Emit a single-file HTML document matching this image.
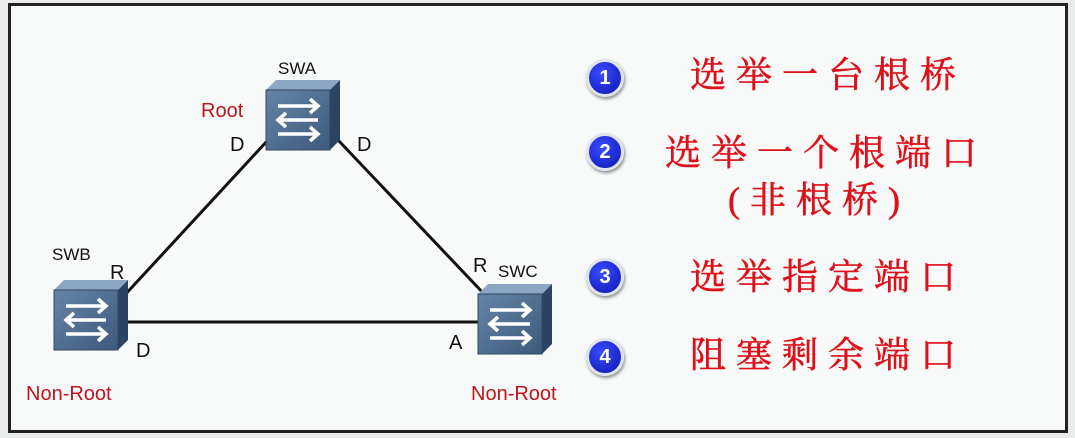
<!DOCTYPE html>
<html><head><meta charset="utf-8"><style>
body{margin:0;width:1075px;height:438px;background:#e9ecea;position:relative;overflow:hidden;font-family:"Liberation Sans",sans-serif}
#f{position:absolute;left:8px;top:3px;width:1054px;height:424px;border:3px solid #222;background:#f7faf8}
.t{position:absolute;font-size:17px;color:#111}
.b{font-size:20px}
.r{color:#c0141c}
.cn{position:absolute;font-family:"Liberation Serif","Noto Serif CJK SC","Noto Sans CJK SC",serif;color:#e0101a;font-size:36px;letter-spacing:10px;white-space:nowrap;line-height:40px;-webkit-text-stroke:0.6px #e0101a}
.n{position:absolute;width:32px;height:32px;border-radius:50%;background:radial-gradient(circle at 40% 35%,#3a4cff,#0a14b0);border:3px solid #dfe3f0;box-shadow:1px 2px 3px #888;color:#fff;font-weight:bold;font-size:20px;text-align:center;line-height:32px}
</style></head><body>
<div id="f"></div>
<svg width="1075" height="438" style="position:absolute;left:0;top:0">
<g stroke="#111" stroke-width="3">
<line x1="268" y1="140" x2="122" y2="298"/><line x1="338" y1="140" x2="486" y2="296"/><line x1="122" y1="322" x2="480" y2="322"/></g>
<defs><linearGradient id="g" x1="0" y1="0" x2="1" y2="1"><stop offset="0" stop-color="#6584a6"/><stop offset="1" stop-color="#3d5a7c"/></linearGradient>
<g id="sw">
<polygon points="0,12 64,12 74,2 10,2" fill="#8ba7c4"/>
<polygon points="64,12 74,2 74,62 64,72" fill="#2b4463"/>
<rect x="0" y="12" width="64" height="60" fill="url(#g)" stroke="#30465f"/>
<g stroke="#fff" stroke-width="3.5" fill="none"><path d="M12 28h40m-8-7 8 7-8 7"/><path d="M52 42h-40m8-7-8 7 8 7"/><path d="M12 56h40m-8-7 8 7-8 7"/></g>
</g></defs>
<use href="#sw" transform="translate(266,78)"/>
<use href="#sw" transform="translate(54,278)"/>
<use href="#sw" transform="translate(478,282)"/>
</svg>
<div class="t" style="left:278px;top:59px">SWA</div>
<div class="t r b" style="left:201px;top:100px">Root</div>
<div class="t b" style="left:230px;top:134px">D</div>
<div class="t b" style="left:357px;top:134px">D</div>
<div class="t" style="left:52px;top:245px">SWB</div>
<div class="t b" style="left:110px;top:262px">R</div>
<div class="t b" style="left:136px;top:340px">D</div>
<div class="t r b" style="left:26px;top:383px">Non-Root</div>
<div class="t b" style="left:473px;top:255px">R</div>
<div class="t" style="left:498px;top:262px">SWC</div>
<div class="t b" style="left:449px;top:332px">A</div>
<div class="t r b" style="left:471px;top:383px">Non-Root</div>
<div class="n" style="left:586px;top:59px">1</div>
<div class="n" style="left:586px;top:133px">2</div>
<div class="n" style="left:586px;top:258px">3</div>
<div class="n" style="left:586px;top:338px">4</div>
<div class="cn" style="left:690px;top:55px">选举一台根桥</div>
<div class="cn" style="left:665px;top:133px">选举一个根端口</div>
<div class="cn" style="left:728px;top:180px">(非根桥)</div>
<div class="cn" style="left:690px;top:257px">选举指定端口</div>
<div class="cn" style="left:690px;top:335px">阻塞剩余端口</div>
</body></html>
